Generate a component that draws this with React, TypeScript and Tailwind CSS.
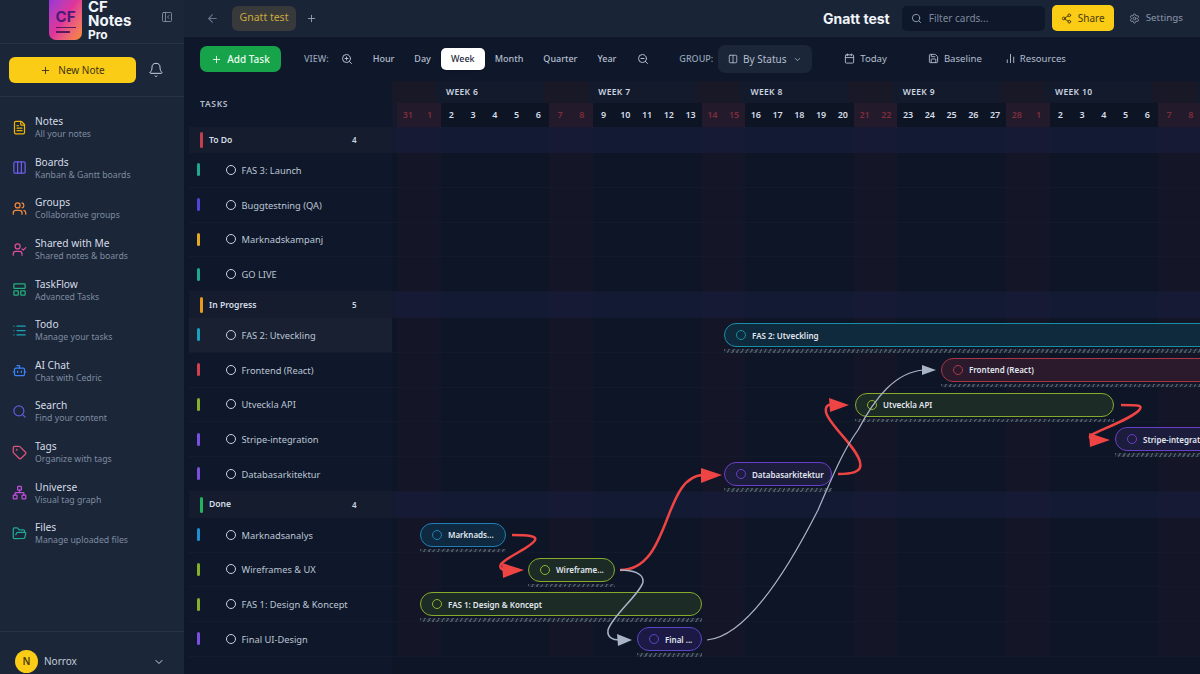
import {
  ArrowLeft,
  Bell,
  Bot,
  Calendar,
  ChartNoAxesColumn,
  ChevronDown,
  Columns2,
  Columns3,
  FileText,
  FolderOpen,
  LayoutPanelTop,
  List,
  Network,
  PanelLeftClose,
  Plus,
  Save,
  Search,
  Settings,
  Share2,
  Tag,
  UserCheck,
  Users,
  ZoomIn,
  ZoomOut,
} from "lucide-react";

const navItems = [
  { icon: FileText, color: "text-[#eab308]", title: "Notes", sub: "All your notes" },
  { icon: Columns3, color: "text-[#6d5ce7]", title: "Boards", sub: "Kanban & Gantt boards" },
  { icon: Users, color: "text-[#f08a3c]", title: "Groups", sub: "Collaborative groups" },
  { icon: UserCheck, color: "text-[#db4f9b]", title: "Shared with Me", sub: "Shared notes & boards" },
  { icon: LayoutPanelTop, color: "text-[#22b07d]", title: "TaskFlow", sub: "Advanced Tasks" },
  { icon: List, color: "text-[#1ba5b8]", title: "Todo", sub: "Manage your tasks" },
  { icon: Bot, color: "text-[#3b82f6]", title: "AI Chat", sub: "Chat with Cedric" },
  { icon: Search, color: "text-[#5f5bd6]", title: "Search", sub: "Find your content" },
  { icon: Tag, color: "text-[#e0557a]", title: "Tags", sub: "Organize with tags" },
  { icon: Network, color: "text-[#c04fdc]", title: "Universe", sub: "Visual tag graph" },
  { icon: FolderOpen, color: "text-[#1fa99a]", title: "Files", sub: "Manage uploaded files" },
];

const views = ["Hour", "Day", "Week", "Month", "Quarter", "Year"];

const weeks = ["WEEK 6", "WEEK 7", "WEEK 8", "WEEK 9", "WEEK 10"];

const days = [
  31, ...Array.from({ length: 28 }, (_, i) => i + 1), ...Array.from({ length: 8 }, (_, i) => i + 1),
];
// the first two columns are sat/sun, then five weekdays and two weekend days repeat
const isWeekend = (i: number) => i % 7 < 2;

type Bar = { label: string; box: string; ring: string; hatch: string };
type Row =
  | { kind: "group"; name: string; count: number; color: string }
  | { kind: "task"; name: string; color: string; active?: boolean; bar?: Bar };

const rows: Row[] = [
  { kind: "group", name: "To Do", count: 4, color: "bg-[#c2404d]" },
  { kind: "task", name: "FAS 3: Launch", color: "bg-[#1fa88f]" },
  { kind: "task", name: "Buggtestning (QA)", color: "bg-[#4f46d8]" },
  { kind: "task", name: "Marknadskampanj", color: "bg-[#e5a823]" },
  { kind: "task", name: "GO LIVE", color: "bg-[#1fa88f]" },
  { kind: "group", name: "In Progress", count: 5, color: "bg-[#e59a1c]" },
  {
    kind: "task",
    name: "FAS 2: Utveckling",
    color: "bg-[#1a9fc0]",
    active: true,
    bar: {
      label: "FAS 2: Utveckling",
      box: "ml-[332px] w-[500px] border-[#1a8ea5] bg-[#0f2a3c]",
      ring: "border-[#1a8ea5]",
      hatch: "ml-[332px] w-[500px]",
    },
  },
  {
    kind: "task",
    name: "Frontend (React)",
    color: "bg-[#d0404d]",
    bar: {
      label: "Frontend (React)",
      box: "ml-[549px] w-[400px] border-[#a83645] bg-[#2a1a2b]",
      ring: "border-[#b23a4a]",
      hatch: "ml-[549px] w-[400px]",
    },
  },
  {
    kind: "task",
    name: "Utveckla API",
    color: "bg-[#84b02a]",
    bar: {
      label: "Utveckla API",
      box: "ml-[463px] w-[259px] border-[#86ac2e] bg-[#1c2b25]",
      ring: "border-[#8ab52e]",
      hatch: "ml-[463px] w-[259px]",
    },
  },
  {
    kind: "task",
    name: "Stripe-integration",
    color: "bg-[#7c4fe0]",
    bar: {
      label: "Stripe-integrat",
      box: "ml-[723px] w-[200px] border-[#6a3fc8] bg-[#1c1c3d]",
      ring: "border-[#6a3fc8]",
      hatch: "ml-[723px] w-[200px]",
    },
  },
  {
    kind: "task",
    name: "Databasarkitektur",
    color: "bg-[#7c4fe0]",
    bar: {
      label: "Databasarkitektur",
      box: "ml-[332px] w-[108px] border-[#6a3fc8] bg-[#1c1c3d]",
      ring: "border-[#6a3fc8]",
      hatch: "ml-[332px] w-[108px]",
    },
  },
  { kind: "group", name: "Done", count: 4, color: "bg-[#22b35e]" },
  {
    kind: "task",
    name: "Marknadsanalys",
    color: "bg-[#1f8fd0]",
    bar: {
      label: "Marknads...",
      box: "ml-[28px] w-[86px] border-[#1f7fb5] bg-[#0f2a40]",
      ring: "border-[#1f7fb5]",
      hatch: "ml-[28px] w-[86px]",
    },
  },
  {
    kind: "task",
    name: "Wireframes & UX",
    color: "bg-[#84b02a]",
    bar: {
      label: "Wireframe...",
      box: "ml-[136px] w-[87px] border-[#86ac2e] bg-[#1c2b25]",
      ring: "border-[#8ab52e]",
      hatch: "ml-[136px] w-[87px]",
    },
  },
  {
    kind: "task",
    name: "FAS 1: Design & Koncept",
    color: "bg-[#84b02a]",
    bar: {
      label: "FAS 1: Design & Koncept",
      box: "ml-[28px] w-[282px] border-[#86ac2e] bg-[#1c2b25]",
      ring: "border-[#8ab52e]",
      hatch: "ml-[28px] w-[282px]",
    },
  },
  {
    kind: "task",
    name: "Final UI-Design",
    color: "bg-[#7c4fe0]",
    bar: {
      label: "Final ...",
      box: "ml-[245px] w-[65px] border-[#5b45c8] bg-[#1c1a45]",
      ring: "border-[#5b45c8]",
      hatch: "ml-[245px] w-[65px]",
    },
  },
];

function Sidebar() {
  return (
    <aside className="flex h-[674px] w-[184px] shrink-0 flex-col bg-[#1b2639]">
      <div className="relative flex h-[44px] shrink-0 items-center overflow-hidden border-b border-[#263246]">
        <div className="ml-[49px] mt-[-11px] flex h-[47px] w-[33px] shrink-0 flex-col items-center justify-end rounded-b-[7px] bg-gradient-to-br from-[#8a2be2] via-[#e0339a] to-[#fb8a1c] pb-[7px]">
          <span className="text-[15px] leading-[14px] font-bold text-[#4a1a78] font-['Inter',sans-serif]">CF</span>
          <span className="mt-[3px] h-[1.5px] w-[20px] bg-[#5a1a5e]" />
          <span className="mt-[3px] mr-[6px] h-[1.5px] w-[14px] bg-[#5a1a5e]" />
        </div>
        <div className="ml-[6px] mt-[-3px] flex flex-col font-['Inter',sans-serif] font-bold text-[#f1f5f9]">
          <span className="text-[15px] leading-[14px]">CF</span>
          <span className="text-[15px] leading-[14px]">Notes</span>
          <span className="text-[12px] leading-[13px]">Pro</span>
        </div>
        <PanelLeftClose className="absolute left-[161px] top-[11px] h-[12px] w-[12px] text-[#94a3b8]" strokeWidth={1.5} />
      </div>
      <div className="flex h-[53px] shrink-0 items-center gap-[12px] border-b border-[#263246] pl-[9px]">
        <button className="flex h-[26px] w-[127px] items-center justify-center gap-[7px] rounded-[6px] bg-[#facc15] text-[10px] text-[#3f3310]">
          <Plus className="h-[11px] w-[11px]" />
          New Note
        </button>
        <Bell className="h-[16px] w-[16px] text-[#cbd5e1]" strokeWidth={1.5} />
      </div>
      <nav className="flex flex-col pt-[10px]">
        {navItems.map(({ icon: Icon, color, title, sub }) => (
          <div key={title} className="flex h-[40.6px] items-center gap-[8px] pl-[12px]">
            <Icon className={`h-[15px] w-[15px] shrink-0 ${color}`} strokeWidth={2} />
            <div className="flex flex-col">
              <span className="text-[10.2px] leading-[14px] text-[#d5dce6]">{title}</span>
              <span className="text-[8.7px] leading-[12px] text-[#7f8ca0]">{sub}</span>
            </div>
          </div>
        ))}
      </nav>
      <div className="mt-auto flex h-[43px] items-end border-t border-[#263246] pb-[1px] pl-[15px]">
        <span className="flex h-[23px] w-[23px] items-center justify-center rounded-full bg-[#facc15] text-[10px] font-semibold text-[#4a3a0c]">
          N
        </span>
        <span className="ml-[6px] self-end pb-[4px] text-[10px] text-[#c3ccd8]">Norrox</span>
        <ChevronDown className="ml-[76px] mb-[5px] h-[12px] w-[12px] text-[#cbd5e1]" />
      </div>
    </aside>
  );
}

function TopBar() {
  return (
    <header className="flex h-[37px] shrink-0 items-center border-b border-[#1c2638] bg-[#1a2437] pl-[22px]">
      <ArrowLeft className="h-[13px] w-[13px] text-[#64748b]" />
      <span className="ml-[13px] flex h-[25px] w-[64px] items-center justify-center rounded-[6px] bg-[#38393a] text-[10.5px] text-[#c9a93f]">
        Gnatt test
      </span>
      <Plus className="ml-[10px] h-[11px] w-[11px] text-[#94a3b8]" />
      <span className="ml-auto text-[14px] font-bold text-[#f1f5f9] font-['Inter',sans-serif]">Gnatt test</span>
      <div className="ml-[12px] flex h-[25px] w-[143px] items-center gap-[7px] rounded-[5px] bg-[#0f172a] pl-[9px]">
        <Search className="h-[11px] w-[11px] text-[#94a3b8]" />
        <span className="text-[10px] text-[#7c889b]">Filter cards...</span>
      </div>
      <button className="ml-[7px] flex h-[26px] w-[62px] items-center justify-center gap-[6px] rounded-[5px] bg-[#facc15] text-[10px] text-[#4a3a0c]">
        <Share2 className="h-[11px] w-[11px]" />
        Share
      </button>
      <div className="ml-[15px] mr-[17px] flex items-center gap-[6px] text-[9.8px] text-[#8a97a9]">
        <Settings className="h-[11px] w-[11px]" />
        Settings
      </div>
    </header>
  );
}

function Toolbar() {
  return (
    <div className="flex h-[44px] shrink-0 items-center bg-[#0f172a] pl-[16px] text-[9px] font-medium text-[#b4bfce]">
      <button className="flex h-[26px] w-[81px] items-center justify-center gap-[5px] rounded-[7px] bg-[#17a34a] text-[10px] text-[#e9fbef]">
        <Plus className="h-[11px] w-[11px]" />
        Add Task
      </button>
      <span className="ml-[23px] text-[#94a3b8]">VIEW:</span>
      <ZoomIn className="ml-[12px] h-[12px] w-[12px]" />
      <div className="ml-[10px] flex items-center">
        {views.map((v) =>
          v === "Week" ? (
            <span
              key={v}
              className="flex h-[22px] w-[44px] items-center justify-center rounded-[5px] bg-white text-[#1e293b] shadow"
            >
              {v}
            </span>
          ) : (
            <span key={v} className="flex h-[22px] items-center px-[10px]">
              {v}
            </span>
          ),
        )}
      </div>
      <ZoomOut className="ml-[11px] h-[12px] w-[12px]" />
      <span className="ml-[30px] text-[#94a3b8]">GROUP:</span>
      <button className="ml-[5px] flex h-[28px] w-[94px] items-center justify-center gap-[5px] rounded-[7px] bg-[#1b2639] text-[10px] font-normal">
        <Columns2 className="h-[10px] w-[10px]" />
        By Status
        <ChevronDown className="ml-[2px] h-[9px] w-[9px]" />
      </button>
      <span className="ml-[32px] flex items-center gap-[5px] text-[9.6px] font-normal">
        <Calendar className="h-[11px] w-[11px]" />
        Today
      </span>
      <span className="ml-[41px] flex items-center gap-[5px] text-[9.6px] font-normal">
        <Save className="h-[11px] w-[11px]" />
        Baseline
      </span>
      <span className="ml-[23px] flex items-center gap-[4px] text-[9.6px] font-normal">
        <ChartNoAxesColumn className="h-[11px] w-[11px]" />
        Resources
      </span>
    </div>
  );
}

function TaskList() {
  return (
    <div className="flex w-[208px] shrink-0 flex-col bg-[#0f172a] pl-[5px]">
      <div className="flex h-[46px] items-center pl-[11px] text-[8.5px] font-semibold tracking-[0.08em] text-[#b4bfce]">
        TASKS
      </div>
      {rows.map((row) =>
        row.kind === "group" ? (
          <div key={row.name} className="flex h-[26px] items-center bg-[#141c2e] pl-[11px]">
            <span className={`h-[16px] w-[3px] rounded-full ${row.color}`} />
            <span className="ml-[6px] w-[143px] text-[8.6px] font-semibold text-[#d5dce6]">{row.name}</span>
            <span className="text-[8px] font-semibold text-[#cbd5e1]">{row.count}</span>
          </div>
        ) : (
          <div
            key={row.name}
            className={`flex h-[34.75px] items-center border-b border-[#141c2e] pl-[8px] ${row.active ? "bg-[#182031]" : ""}`}
          >
            <span className={`h-[13px] w-[2.5px] rounded-full ${row.color}`} />
            <span className="ml-[26.5px] h-[10px] w-[10px] rounded-full border-[1.5px] border-[#cbd5e1]" />
            <span className="ml-[5.5px] pt-[2px] text-[9.3px] text-[#bcc6d4]">{row.name}</span>
          </div>
        ),
      )}
    </div>
  );
}

function Arrows() {
  // coordinates are page pixels minus the timeline origin (392, 127)
  const t = (x: number, y: number) => `${x - 392},${y - 127}`;
  const red = "#ef4444";
  const gray = "#a9b4c6";
  return (
    <svg className="absolute left-0 top-0 h-[547px] w-[808px]" viewBox="0 0 808 547" fill="none">
      <path
        d={`M${t(512, 535)} C${t(528, 535)} ${t(537, 536)} ${t(535, 540)} C${t(532, 547)} ${t(508, 556)} ${t(501, 564)} C${t(499, 568)} ${t(502, 570)} ${t(506, 570)}`}
        stroke={red}
        strokeWidth="2.5"
      />
      <polygon points={`${t(524, 570)} ${t(502, 563)} ${t(503, 578)}`} fill={red} />
      <path
        d={`M${t(620, 570)} C${t(672, 570)} ${t(662, 475)} ${t(704, 475)}`}
        stroke={red}
        strokeWidth="2.5"
      />
      <polygon points={`${t(722, 475)} ${t(701, 468)} ${t(701, 483)}`} fill={red} />
      <path
        d={`M${t(838, 474)} C${t(850, 474)} ${t(863, 473)} ${t(860, 462)} C${t(856, 446)} ${t(828, 424)} ${t(826, 412)} C${t(825, 406)} ${t(828, 404)} ${t(833, 405)}`}
        stroke={red}
        strokeWidth="2.5"
      />
      <polygon points={`${t(849, 405)} ${t(829, 398)} ${t(830, 412)}`} fill={red} />
      <path
        d={`M${t(1121, 405)} C${t(1135, 405)} ${t(1143, 405)} ${t(1140, 409)} C${t(1135, 417)} ${t(1105, 428)} ${t(1091, 435)} C${t(1088, 438)} ${t(1092, 440)} ${t(1095, 440)}`}
        stroke={red}
        strokeWidth="2.5"
      />
      <polygon points={`${t(1110, 440)} ${t(1089, 433)} ${t(1090, 447)}`} fill={red} />
      <path
        d={`M${t(620, 570)} C${t(632, 570)} ${t(644, 573)} ${t(643, 582)} C${t(641, 593)} ${t(612, 616)} ${t(608, 630)} C${t(607, 637)} ${t(612, 640)} ${t(620, 640)}`}
        stroke={gray}
        strokeWidth="1.5"
      />
      <polygon points={`${t(632, 640)} ${t(617, 634)} ${t(618, 646)}`} fill={gray} />
      <path
        d={`M${t(707, 640)} C${t(745, 637)} ${t(785, 575)} ${t(818, 510)} C${t(832, 478)} ${t(842, 452)} ${t(858, 430)} C${t(875, 398)} ${t(895, 372)} ${t(924, 370)}`}
        stroke={gray}
        strokeWidth="1.25"
      />
      <polygon points={`${t(936, 370)} ${t(922, 365)} ${t(922, 375)}`} fill={gray} />
    </svg>
  );
}

function Timeline() {
  return (
    <div className="relative min-w-0 flex-1 overflow-hidden bg-[#0e1526]">
      <div className="relative flex h-[22px] items-center bg-[#131a2b] pl-[49px]">
        <div className="absolute inset-0 flex">
          {days.map((_, i) => (
            <span key={i} className={`h-full w-[21.75px] shrink-0 ${isWeekend(i) ? "bg-[#191827]" : ""}`} />
          ))}
        </div>
        {weeks.map((w) => (
          <span
            key={w}
            className="relative w-[152.25px] shrink-0 pl-[5px] text-[8.5px] font-semibold tracking-[0.04em] text-[#cbd5e1]"
          >
            {w}
          </span>
        ))}
      </div>
      <div className="flex h-[24px] items-center bg-[#131a2b] pl-[5px]">
        {days.map((d, i) => (
          <span
            key={i}
            className={`flex h-full w-[21.75px] shrink-0 items-center justify-center text-[9px] font-semibold ${isWeekend(i) ? "bg-[#231a2b] text-[#7f2d3c]" : "bg-[#0d1424] text-[#d5dce6]"}`}
          >
            {d}
          </span>
        ))}
      </div>
      <div className="relative">
        <div className="absolute inset-0 flex pl-[5px]">
          {days.map((_, i) => (
            <span
              key={i}
              className={`h-full w-[21.75px] shrink-0 ${isWeekend(i) ? "bg-[#141526]" : "bg-[#0d1526]"}`}
            />
          ))}
        </div>
        <div className="relative">
          {rows.map((row) =>
            row.kind === "group" ? (
              <div key={row.name} className="h-[26px] bg-[#171c3a]/70" />
            ) : (
              <div key={row.name} className="h-[34.75px] border-b border-[#141c2e]/70 pt-[5px]">
                {row.bar && (
                  <>
                    <div
                      className={`flex h-[24px] items-center overflow-hidden rounded-full border-[1.5px] pl-[11px] ${row.bar.box}`}
                    >
                      <span className={`h-[10px] w-[10px] shrink-0 rounded-full border-[1.5px] ${row.bar.ring}`} />
                      <span className="ml-[6px] pt-[1px] whitespace-nowrap text-[8px] font-semibold text-[#e2e8f0]">
                        {row.bar.label}
                      </span>
                    </div>
                    <div
                      className={`mt-[2px] h-[3.5px] bg-[repeating-linear-gradient(120deg,#4b5563_0px,#4b5563_1.5px,#1a2332_1.5px,#1a2332_4px)] ${row.bar.hatch}`}
                    />
                  </>
                )}
              </div>
            ),
          )}
          <Arrows />
        </div>
      </div>
    </div>
  );
}

export default function App() {
  return (
    <div className="flex h-[674px] w-[1200px] overflow-hidden bg-[#0f172a] font-['Noto_Sans','Open_Sans',sans-serif]">
      <Sidebar />
      <main className="flex min-w-0 flex-1 flex-col">
        <TopBar />
        <Toolbar />
        <div className="flex min-h-0 flex-1">
          <TaskList />
          <Timeline />
        </div>
      </main>
    </div>
  );
}
